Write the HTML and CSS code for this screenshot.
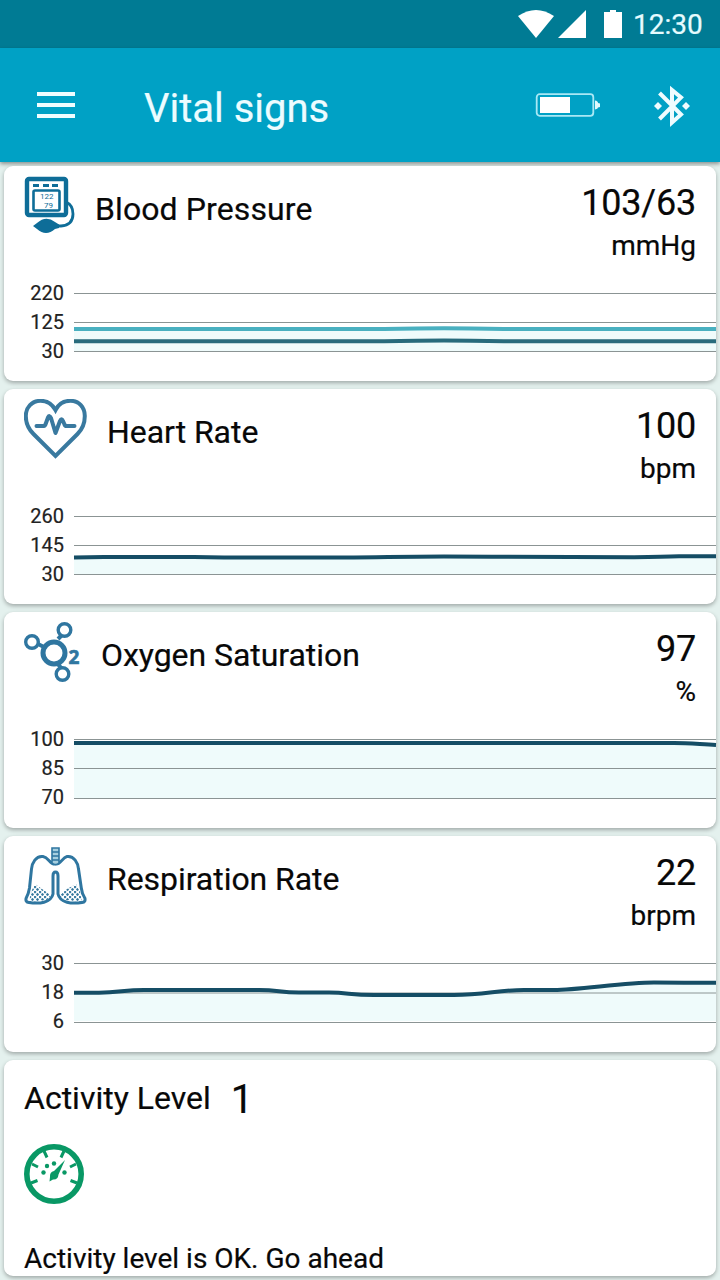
FILE: index.html
```html
<!DOCTYPE html>
<html lang="en">
<head>
    <meta charset="utf-8">
    <title>Vital signs</title>
    <link rel="stylesheet" href="styles.css">
</head>
<body>
    <div class="status-bar">
        <svg class="wifi" width="36" height="28" viewBox="0 0 36 28"><path d="M0 6Q18-6 36 6L18 28Z"/></svg>
        <svg class="signal" width="28" height="28" viewBox="0 0 28 28"><path d="M0 28H28V0Z"/></svg>
        <svg class="phone-battery" width="18" height="28" viewBox="0 0 18 28"><path d="M0 2H6V0H12V2H18V28H0Z"/></svg>
        <span class="clock">12:30</span>
    </div>
    <header class="toolbar">
        <button class="menu"><span></span><span></span><span></span></button>
        <h1>Vital signs</h1>
        <svg class="device-battery" width="66" height="26" viewBox="0 0 66 26">
            <rect x="1.7" y="2.2" width="56.6" height="21.6" rx="3" fill="none" stroke="#a9e8f5" stroke-width="1.8"/>
            <rect x="5" y="5" width="30" height="16" fill="#fff"/>
            <path d="M60 8.5Q63 9 63 11L65 11.5V15L63 15.5Q63 17 60 17.5Z" fill="#dff8fc"/>
        </svg>
        <svg class="bluetooth" width="36" height="42" viewBox="0 0 36 42">
            <path d="M5.5 8L27 29.5L18 37.5V5L27 12.5L5.5 34" fill="none" stroke="#effcff" stroke-width="4"/>
            <path d="M4 17L8 21L4 25L0 21ZM32 17L36 21L32 25L28 21Z" fill="#effcff"/>
        </svg>
    </header>
    <main>
        <section class="card">
            <div class="card-head">
                <svg class="icon-bp" width="52" height="58" viewBox="0 0 52 58" fill="none" stroke="#0e6d98">
                    <rect x="3" y="3" width="39" height="36" rx="2" stroke-width="4.4"/>
                    <path d="M9 9.5H15M19 9.5H25M28 9.5H34" stroke-width="3.2"/>
                    <rect x="9.5" y="14.5" width="26" height="20" rx="1.5" stroke-width="2.6"/>
                    <path d="M42 26Q49 29 49 38Q49 49 37 50H30" stroke-width="2.8"/>
                    <path d="M9 50L13 47Q22 39 31 46L35 48.5V52L31 53Q22 61 13 53Z" fill="#0e6d98" stroke="none"/>
                    <g class="bp-digits" fill="#0e6d98"><text x="16" y="22.6">122</text><text x="20" y="32.3">79</text></g>
                </svg>
                <h2>Blood Pressure</h2>
                <div class="reading"><b>103/63</b><span>mmHg</span></div>
            </div>
            <div class="chart">
                <div class="scale"><span>220</span><span>125</span><span>30</span></div>
                <svg class="plot" width="642" height="60" viewBox="0 0 642 60">
                    <path class="area" d="M0 36H642V59H0Z"/>
                    <path class="grid" d="M0 1.5H642M0 30.5H642M0 59.5H642"/>
                    <path class="line systolic" d="M0 37H310C340 37 345 36.2 370 36.2S400 37 430 37H642"/>
                    <path class="line diastolic" d="M0 49.2H310C340 49.2 345 48.5 370 48.5S400 49.2 430 49.2H642"/>
                </svg>
            </div>
        </section>
        <section class="card">
            <div class="card-head">
                <svg width="64" height="60" viewBox="0 0 64 60" fill="none" stroke="#39799f">
                    <path d="M31.5 11C27 3 21 1.8 16.5 1.8C8 1.8 1.8 8.5 1.8 17C1.8 24 4.5 30 9.5 35L31.5 57L53.5 35C58.5 30 60.8 24 60.8 17C60.8 8.5 55 1.8 46.5 1.8C41 1.8 35 4 31.5 11Z" stroke-width="4"/>
                    <path d="M12.5 27H20Q21 27 22 24L24 18.5Q25.5 15.5 27 19L31.5 34L36 22Q37.5 18.5 39 22L40.5 25.5Q41 27 43 27H50.5" stroke-width="4" stroke-linecap="round" stroke-linejoin="round"/>
                </svg>
                <h2>Heart Rate</h2>
                <div class="reading"><b>100</b><span>bpm</span></div>
            </div>
            <div class="chart">
                <div class="scale"><span>260</span><span>145</span><span>30</span></div>
                <svg class="plot" width="642" height="60" viewBox="0 0 642 60">
                    <path class="area" d="M0 42H642V59H0Z"/>
                    <path class="grid" d="M0 1.5H642M0 30.5H642M0 59.5H642"/>
                    <path class="line" d="M0 42.5L30 42H120L150 42.5H270C310 42.5 320 41.5 370 41.5C430 41.5 450 42.2 560 42.2Q590 42 605 41.3H642"/>
                </svg>
            </div>
        </section>
        <section class="card">
            <div class="card-head">
                <svg class="icon-o2" width="58" height="60" viewBox="0 0 58 60" fill="none" stroke="#2f76a0">
                    <path d="M14 22L20 25M34 17L38 13M34 42L37 46" stroke-width="4"/>
                    <circle cx="30" cy="31" r="11" stroke-width="5"/>
                    <circle cx="8" cy="20" r="6.3" stroke-width="3.4"/>
                    <circle cx="40.5" cy="8" r="6.3" stroke-width="3.4"/>
                    <circle cx="38.5" cy="52" r="6.3" stroke-width="3.4"/>
                    <text x="44.5" y="41.5">2</text>
                </svg>
                <h2>Oxygen Saturation</h2>
                <div class="reading"><b>97</b><span>%</span></div>
            </div>
            <div class="chart">
                <div class="scale"><span>100</span><span>85</span><span>70</span></div>
                <svg class="plot" width="642" height="60" viewBox="0 0 642 60">
                    <path class="area" d="M0 5H642V60H0Z"/>
                    <path class="grid" d="M0 1.5H642M0 30.5H642M0 60.5H642"/>
                    <path class="line" d="M0 5H600C615 5 625 6.2 642 7"/>
                </svg>
            </div>
        </section>
        <section class="card">
            <div class="card-head">
                <svg width="64" height="60" viewBox="0 0 64 60" fill="none" stroke="#2f76a0">
                    <defs>
                        <pattern id="dots" width="5" height="5" patternUnits="userSpaceOnUse">
                            <circle cx="1" cy="1" r=".9" fill="#3a7694"/><circle cx="3.5" cy="3.5" r=".9" fill="#3a7694"/>
                        </pattern>
                    </defs>
                    <path d="M7 46L11 38L18 43L27 49L23 54L5 56ZM56 46L52 38L43 43L35 50L42 54L58 56Z" fill="url(#dots)" stroke="none"/>
                    <path d="M31.5 18C26 19 25 11.5 19 10.5C12 9.5 8 17 7.5 23L5.5 42Q4.5 48 2.2 52Q1 56 5 56.5C15 58 27 57 29 48V30Q29 26 31.5 26T34 30V48C36 57 48 58 58 56.5Q62 56 60.8 52Q58 48 57.3 42L54.5 23C54 17 50 9.5 43 10.5C38 11.5 37 19 31.5 18Z" stroke-width="3"/>
                    <path d="M28 2H35V17Q31.5 20 28 17ZM28 6H35M28 10H35M28 14H35" fill="#a7cfdf" stroke-width="1.6"/>
                </svg>
                <h2>Respiration Rate</h2>
                <div class="reading"><b>22</b><span>brpm</span></div>
            </div>
            <div class="chart">
                <div class="scale"><span>30</span><span>18</span><span>6</span></div>
                <svg class="plot" width="642" height="60" viewBox="0 0 642 60">
                    <path class="area" d="M0 31H30L65 28.5H195L225 31H260L290 33.5H385L450 29H485L580 20.5H642V59H0Z"/>
                    <path class="grid" d="M0 1.5H642M0 31H642M0 60.5H642"/>
                    <path class="line" d="M0 30.7H25C45 30.7 50 28 70 28H185C205 28 205 30.5 225 30.5H255C275 30.5 275 33 300 33H380C410 33 425 28 450 28H480C505 28 550 20.5 580 20.5L610 20.8H642"/>
                </svg>
            </div>
        </section>
        <section class="card activity">
            <div class="activity-head"><h2>Activity Level</h2><b>1</b></div>
            <svg width="60" height="60" viewBox="0 0 60 60" fill="none" stroke="#099865">
                <circle cx="30" cy="30" r="27.2" stroke-width="5.6"/>
                <path d="M8 20L14 23M20 7L23 13.5M40 7L37 13.5M52 20L46 23M7 39L13.5 36.5M53 39L46.5 36.5" stroke-width="3"/>
                <path d="M41 16L34.5 30.5Q34 36 29 35.5L25.5 37.5L26 33Q25.5 28 30 27Z" fill="#099865" stroke="none"/>
                <circle cx="19.5" cy="28.5" r="2.2" fill="#099865" stroke="none"/>
                <circle cx="23" cy="22" r="2.2" fill="#099865" stroke="none"/>
                <circle cx="30" cy="19.5" r="2.2" fill="#099865" stroke="none"/>
                <circle cx="40.5" cy="28.5" r="2.2" fill="#099865" stroke="none"/>
            </svg>
            <p>Activity level is OK. Go ahead</p>
        </section>
    </main>
</body>
</html>
```
FILE: styles.css
```css
* {
    box-sizing: border-box;
}
body {
    margin: 0;
    height: 1280px;
    overflow: hidden;
    background-color: #e4f1ee;
    font-family: Roboto, sans-serif;
    color: #080808;
    -webkit-text-stroke: .2px;
}
h1, h2, p {
    margin: 0;
    font-weight: 400;
}
b {
    font-weight: 400;
}
svg {
    display: block;
    flex: none;
}
.status-bar {
    display: flex;
    align-items: center;
    height: 48px;
    padding-left: 518px;
    background-color: #007b94;
    fill: #fff;
}
.signal {
    margin-left: 4px;
}
.phone-battery {
    margin-left: 18px;
}
.clock {
    margin-left: 11px;
    font-size: 28px;
    color: #e6fbff;
}
.toolbar {
    display: flex;
    align-items: center;
    height: 114px;
    padding: 0 30px 0 37px;
    background-color: #00a1c5;
    box-shadow: 0 2px 4px rgba(0, 0, 0, .4);
}
.menu {
    display: flex;
    flex-direction: column;
    gap: 7px;
    width: 38px;
    padding: 0;
    border: 0;
    background: none;
}
.menu span {
    width: 38px;
    height: 4px;
    background-color: #f0fdff;
}
.toolbar h1 {
    flex: 1;
    margin-left: 69px;
    padding-top: 8px;
    font-size: 40px;
    line-height: 46px;
    color: #ecfcff;
}
.bluetooth {
    margin: 2px 0 0 53px;
}
main {
    display: flex;
    flex-direction: column;
    gap: 8px;
    padding: 4px 4px 0;
}
.card {
    flex: none;
    height: 215px;
    border-radius: 9px;
    background-color: #fff;
    box-shadow: 0 2px 4px rgba(0, 0, 0, .3);
}
.card:nth-child(n+3) {
    height: 216px;
}
.card-head {
    display: flex;
    align-items: flex-start;
    height: 115px;
    padding: 10px 20px 0;
}
.card-head h2 {
    flex: 1;
    margin-left: 19px;
    padding-top: 15px;
    font-size: 32px;
    line-height: 36px;
    letter-spacing: -.05px;
}
.card:first-child h2 {
    letter-spacing: .1px;
}
.reading {
    display: flex;
    flex-direction: column;
    align-items: flex-end;
    padding-top: 6px;
}
.reading b {
    font-size: 36px;
    line-height: 42px;
    letter-spacing: -.2px;
}
.reading span {
    font-size: 28px;
    line-height: 43px;
}
.chart {
    display: flex;
    height: 83px;
}
.scale {
    display: flex;
    flex-direction: column;
    width: 60px;
    margin: -2px 10px 0 0;
    text-align: right;
    font-size: 20px;
    line-height: 29px;
    color: #222;
}
.plot {
    margin-top: 11px;
    overflow: visible;
}
.area {
    fill: #effbfb;
}
.grid {
    stroke: #8b9494;
    stroke-width: 1;
}
.line {
    fill: none;
    stroke: #154d65;
    stroke-width: 4;
}
.systolic {
    stroke: #49b0c0;
}
.diastolic {
    stroke: #286b7c;
}
.bp-digits {
    font-size: 8px;
    stroke: none;
    -webkit-text-stroke: 0;
}
.icon-o2 text {
    font: 700 19px "Open Sans", sans-serif;
    fill: #2f76a0;
    stroke-width: .6;
}
.activity {
    padding: 16px 20px 0;
}
.activity-head {
    display: flex;
    align-items: center;
    height: 44px;
    margin-bottom: 24px;
}
.activity h2 {
    font-size: 32px;
}
.activity b {
    margin-left: 20px;
    padding-top: 2px;
    font-size: 40px;
}
.activity p {
    margin-top: 38px;
    font-size: 28px;
    line-height: 34px;
}
```
